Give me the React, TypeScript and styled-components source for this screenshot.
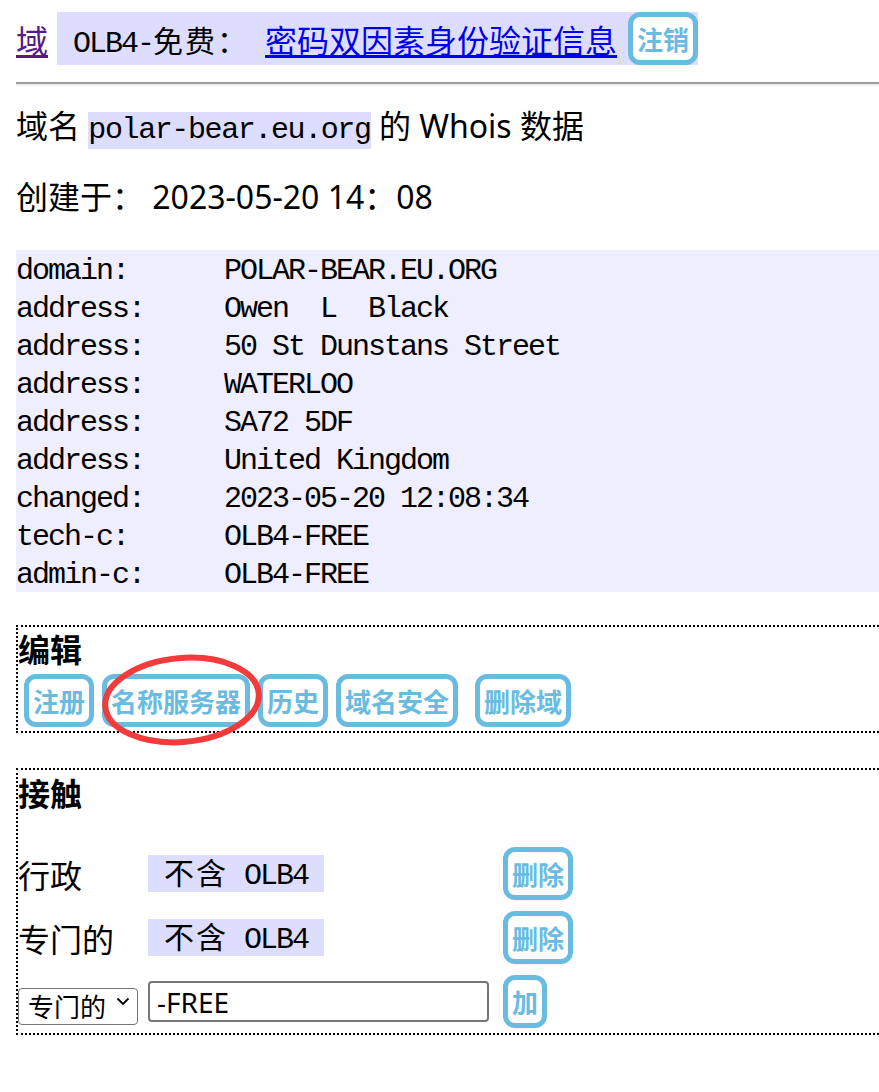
import React from "react";
import styled, { createGlobalStyle } from "styled-components";

const SANS = `"Noto Sans", "Noto Sans CJK SC", sans-serif`;
const MONO = `"Liberation Mono", "Noto Sans CJK SC", monospace`;
const CJK = `"Noto Sans CJK SC", sans-serif`;
const BLUE = "#69bce0";

const GlobalStyle = createGlobalStyle`
  html, body { margin: 0; padding: 0; background: #fff; overflow-x: hidden; }
  body { font-family: ${SANS}; color: #000; }
`;

const Page = styled.div`
  padding: 12px 0 40px 16px;
  font-size: 32px;
`;

const TopBar = styled.div`
  display: flex;
  align-items: center;
  height: 53px;
`;

const DomainLink = styled.a`
  color: #551a8b;
  text-decoration: underline;
  font-family: ${CJK};
  font-size: 32px;
  line-height: 1;
  margin-right: 9px;
`;

const Badge = styled.div`
  display: flex;
  align-items: center;
  background: #ddf;
  height: 53px;
`;

const Mono = styled.span`
  font-family: ${MONO};
  font-size: 30px;
  letter-spacing: -2px;
  white-space: pre;
`;

const Han = styled.span`
  font-family: ${CJK};
  letter-spacing: 2px;
`;

const InfoLink = styled.a`
  color: #0000ee;
  text-decoration: underline;
  font-family: ${CJK};
  font-size: 32px;
  line-height: 1;
`;

const Btn = styled.button<{ $gap?: number }>`
  box-sizing: border-box;
  height: 53px;
  margin: 0 0 0 ${(p) => p.$gap ?? 0}px;
  border: 5px solid ${BLUE};
  border-radius: 12px;
  background: #fff;
  color: ${BLUE};
  font-family: ${CJK};
  font-weight: 700;
  font-size: 26px;
  line-height: 1;
  padding: 0 4px;
  cursor: pointer;
  white-space: nowrap;
`;

const Rule = styled.hr`
  margin: 17px 0 0 0;
  height: 0;
  border: 0;
  border-top: 2px solid #9a9a9a;
  border-bottom: 2px solid #eeeeee;
`;

const Line = styled.p<{ $top: number }>`
  margin: ${(p) => p.$top}px 0 0 0;
  font-family: ${SANS};
  font-size: 32px;
  line-height: 48px;
  white-space: pre;
`;

const Code = styled.code`
  display: inline-block;
  background: #ddf;
  font-family: ${MONO};
  font-size: 30px;
  letter-spacing: -1.4px;
  line-height: 37px;
`;

const Whois = styled.pre`
  margin: 29px 0 0 0;
  background: #eef;
  font-family: ${MONO};
  font-size: 30px;
  letter-spacing: -2px;
  line-height: 38px;
  padding-top: 2px;
  height: 342px;
  box-sizing: border-box;
`;

const Panel = styled.section<{ $top: number; $bottom: number }>`
  margin: ${(p) => p.$top}px -4px 0 0;
  border: 2px dotted #000;
  padding: 0 0 ${(p) => p.$bottom}px 0;
`;

const PanelTitle = styled.h3<{ $lh: number }>`
  margin: 0;
  font-family: ${CJK};
  font-size: 32px;
  font-weight: 700;
  line-height: ${(p) => p.$lh}px;
`;

const BtnRow = styled.div`
  display: flex;
  gap: 8px;
  margin-top: 5px;
  padding-left: 6px;
`;

const Marked = styled.span`
  position: relative;
  display: inline-flex;
`;

const Circle = styled.svg`
  position: absolute;
  left: -6px;
  top: -24px;
  width: 172px;
  height: 100px;
  pointer-events: none;
  overflow: visible;
`;

const ContactGrid = styled.div`
  display: grid;
  grid-template-columns: 130px 355px auto;
  grid-auto-rows: 53px;
  row-gap: 11px;
  align-items: center;
  margin-top: 33px;
`;

const RoleLabel = styled.span`
  font-family: ${CJK};
  font-size: 32px;
  line-height: 1;
`;

const Tag = styled.span`
  justify-self: start;
  display: inline-block;
  background: #ddf;
  font-family: ${MONO};
  font-size: 30px;
  letter-spacing: -2px;
  line-height: 32px;
  white-space: pre;
`;

const Cell = styled.div`
  display: flex;
  align-items: center;
`;

const SelectWrap = styled.div`
  position: relative;
  width: 120px;
  height: 37px;
`;

const RoleSelect = styled.select`
  appearance: none;
  -webkit-appearance: none;
  box-sizing: border-box;
  width: 120px;
  height: 37px;
  font-family: ${CJK};
  font-size: 26px;
  line-height: 1;
  border: 1px solid #767676;
  border-radius: 4px;
  background: #fff;
  color: #000;
  padding: 0 22px 0 9px;
  margin: 0;
`;

const Chevron = styled.svg`
  position: absolute;
  right: 8px;
  top: 13px;
  width: 14px;
  height: 10px;
  pointer-events: none;
`;

const HandleInput = styled.input`
  box-sizing: border-box;
  width: 341px;
  height: 41px;
  font-family: ${SANS};
  font-size: 28px;
  border: 2px solid #767676;
  border-radius: 4px;
  padding: 0 7px;
  color: #000;
  margin: 0;
`;

const whois: [string, string][] = [
  ["domain:", "POLAR-BEAR.EU.ORG"],
  ["address:", "Owen  L  Black"],
  ["address:", "50 St Dunstans Street"],
  ["address:", "WATERLOO"],
  ["address:", "SA72 5DF"],
  ["address:", "United Kingdom"],
  ["changed:", "2023-05-20 12:08:34"],
  ["tech-c:", "OLB4-FREE"],
  ["admin-c:", "OLB4-FREE"],
];

const contacts = ["行政", "专门的"];

export default function App() {
  return (
    <>
      <GlobalStyle />
      <Page>
        <TopBar>
          <DomainLink href="#">域</DomainLink>
          <Badge>
            <Mono> OLB4-<Han>免费：</Han> </Mono>
            <InfoLink href="#">密码双因素身份验证信息</InfoLink>
            <Btn $gap={11}>注销</Btn>
          </Badge>
        </TopBar>
        <Rule />
        <Line $top={16}>
          域名 <Code>polar-bear.eu.org</Code> 的 Whois 数据
        </Line>
        <Line $top={23}>创建于： 2023-05-20 14：08</Line>
        <Whois>
          {whois.map(([k, v]) => k.padEnd(13, " ") + v).join("\n")}
        </Whois>

        <Panel $top={33} $bottom={4}>
          <PanelTitle $lh={42}>编辑</PanelTitle>
          <BtnRow>
            <Btn>注册</Btn>
            <Marked>
              <Btn>名称服务器</Btn>
              <Circle viewBox="0 0 172 100">
                <ellipse
                  cx="86"
                  cy="50"
                  rx="77"
                  ry="42"
                  fill="none"
                  stroke="#f33b3b"
                  strokeWidth="6"
                  transform="rotate(-5 86 50)"
                />
              </Circle>
            </Marked>
            <Btn>历史</Btn>
            <Btn>域名安全</Btn>
            <Btn $gap={9}>删除域</Btn>
          </BtnRow>
        </Panel>

        <Panel $top={35} $bottom={5}>
          <PanelTitle $lh={44}>接触</PanelTitle>
          <ContactGrid>
            {contacts.map((role) => (
              <React.Fragment key={role}>
                <RoleLabel>{role}</RoleLabel>
                <Tag> <Han>不含</Han> OLB4 </Tag>
                <Cell>
                  <Btn>删除</Btn>
                </Cell>
              </React.Fragment>
            ))}
            <SelectWrap>
              <RoleSelect defaultValue="tech">
                <option value="admin">行政</option>
                <option value="tech">专门的</option>
              </RoleSelect>
              <Chevron viewBox="0 0 14 10">
                <path d="M1.5 2.5 L7 8 L12.5 2.5" fill="none" stroke="#000" strokeWidth="1.8" />
              </Chevron>
            </SelectWrap>
            <HandleInput defaultValue="-FREE" />
            <Cell>
              <Btn>加</Btn>
            </Cell>
          </ContactGrid>
        </Panel>
      </Page>
    </>
  );
}
